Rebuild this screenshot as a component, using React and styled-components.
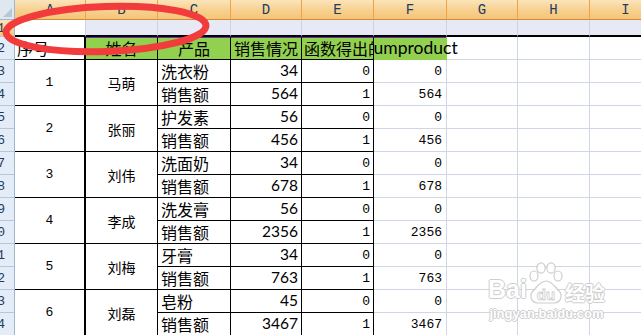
import React from "react";
import styled, { createGlobalStyle, css } from "styled-components";

const GlobalStyle = createGlobalStyle`
  html, body {
    margin: 0;
    padding: 0;
    background: #fff;
    overflow: hidden;
  }
  body {
    font-family: "Noto Sans CJK SC", sans-serif;
  }
`;

const GRID = "#cfd6e6";
const INK = "#000";
const GREEN = "#92d050";
const CJK = `"Noto Sans CJK SC", sans-serif`;
const MONO = `"Liberation Mono", "Noto Sans CJK SC", monospace`;
const LATIN = `Lato, "Liberation Sans", sans-serif`;

const Page = styled.div`
  position: relative;
  width: 641px;
  height: 335px;
  overflow: hidden;
  background: #fff;
`;

const Sheet = styled.div`
  display: grid;
  grid-template-columns: 15px 71px 72px 73px 71px 72px 73px 71px 72px 72px;
  grid-template-rows: 20px 17px 23px;
  grid-auto-rows: 23px;
  width: max-content;
`;

const cell = css`
  box-sizing: border-box;
  display: flex;
  align-items: center;
  overflow: hidden;
  white-space: nowrap;
  line-height: 1;
  color: ${INK};
  border-right: 1px solid ${GRID};
  border-bottom: 1px solid ${GRID};
`;

const Corner = styled.div`
  ${cell};
  position: relative;
  background: #dfe7f1;
  border-right: 1px solid #9eb6ce;
  border-bottom: 1px solid #9eb6ce;
  &::after {
    content: "";
    position: absolute;
    right: 2px;
    bottom: 2px;
    border-left: 9px solid transparent;
    border-bottom: 9px solid #b7c7da;
  }
`;

const ColHead = styled.div`
  ${cell};
  justify-content: center;
  background: linear-gradient(#fbe4ba, #f7d08f 55%, #f5c577);
  border-right: 1px solid #f2a143;
  border-bottom: 1px solid #d4883a;
  font-family: ${MONO};
  font-size: 14px;
  color: #203c5e;
`;

const RowHead = styled.div`
  ${cell};
  background: ${({ $sel }) =>
    $sel ? "linear-gradient(#fbe4ba, #f5c577)" : "#e4ecf7"};
  border-right: 1px solid #9eb6ce;
  border-bottom: 1px solid #b5c7db;
  font-family: ${MONO};
  font-size: 13px;
  color: #203c5e;
`;

const RowNum = styled.div`
  display: flex;
  justify-content: flex-end;
  width: 5px;
  flex: none;
`;

const SelCell = styled.div`
  ${cell};
  background: ${({ $active }) => ($active ? "#fff" : "#e7eaf4")};
  border-right: 1px solid #cdd3e4;
  border-bottom: 2px solid ${INK};
`;

const HeadCell = styled.div`
  ${cell};
  justify-content: ${({ $align }) => $align || "center"};
  padding: 0 ${({ $align }) => ($align ? "2px" : "0")};
  background: ${({ $green }) => ($green ? GREEN : "#fff")};
  box-shadow: ${({ $green }) => ($green ? "inset 0 1px 0 #7030a0" : "none")};
  border-right: ${({ $thick }) => ($thick ? 2 : 1)}px solid ${INK};
  border-bottom: 1px solid ${INK};
  font-family: ${CJK};
  font-size: 16px;
`;

const SumCell = styled.div`
  ${cell};
  overflow: visible;
  background: ${GREEN};
  box-shadow: inset 0 1px 0 #7030a0;
  border-right: 1px solid ${GREEN};
  border-bottom: 1px solid ${GREEN};
  clip-path: inset(0 -200px 0 0);
  font-family: ${LATIN};
  font-size: 17.5px;
  span {
    margin-left: -8px;
  }
`;

const IndexCell = styled.div`
  ${cell};
  grid-row: span 2;
  justify-content: center;
  background: #fff;
  border-right: 2px solid ${INK};
  border-bottom: 1px solid ${INK};
  font-family: ${MONO};
  font-size: 13px;
`;

const NameCell = styled.div`
  ${cell};
  grid-row: span 2;
  justify-content: center;
  background: #fff;
  border-right: 1px solid ${INK};
  border-bottom: 1px solid ${INK};
  font-family: ${CJK};
  font-size: 14px;
`;

const ProductCell = styled.div`
  ${cell};
  padding-left: 3px;
  background: #fff;
  border-right: 1px solid ${INK};
  border-bottom: 1px solid ${INK};
  font-family: ${CJK};
  font-size: 16px;
`;

const NumCell = styled.div`
  ${cell};
  justify-content: flex-end;
  padding-right: ${({ $pad }) => $pad}px;
  background: #fff;
  border-right: 1px solid ${({ $open }) => ($open ? GRID : INK)};
  border-bottom: 1px solid ${({ $open }) => ($open ? GRID : INK)};
  font-family: ${({ $big }) => ($big ? LATIN : MONO)};
  font-size: ${({ $big }) => ($big ? 15.5 : 13)}px;
`;

const BlankCell = styled.div`
  ${cell};
  background: transparent;
`;

const Ring = styled.svg`
  position: absolute;
  left: 0;
  top: 0;
  pointer-events: none;
`;

const Watermark = styled.div`
  position: absolute;
  left: 488px;
  top: 262px;
  display: flex;
  flex-direction: column;
  align-items: center;
  gap: 3px;
  opacity: 0.9;
  pointer-events: none;
`;

const MarkLine = styled.div`
  display: flex;
  align-items: flex-end;
  gap: 1px;
`;

const MarkText = styled.span`
  font-family: ${({ $cjk }) => ($cjk ? CJK : `"Liberation Sans", sans-serif`)};
  font-weight: 700;
  font-size: ${({ $size }) => $size}px;
  line-height: 1;
  color: #fff;
  text-shadow: -1px 0 #c9c9c9, 1px 0 #c9c9c9, 0 -1px #c9c9c9, 0 1px #c9c9c9;
  margin-bottom: ${({ $lift }) => $lift || 0}px;
`;

const COLS = ["A", "B", "C", "D", "E", "F", "G", "H", "I"];

const people = [
  { id: 1, name: "马萌", product: "洗衣粉", qty: 34, sales: 564 },
  { id: 2, name: "张丽", product: "护发素", qty: 56, sales: 456 },
  { id: 3, name: "刘伟", product: "洗面奶", qty: 34, sales: 678 },
  { id: 4, name: "李成", product: "洗发膏", qty: 56, sales: 2356 },
  { id: 5, name: "刘梅", product: "牙膏", qty: 34, sales: 763 },
  { id: 6, name: "刘磊", product: "皂粉", qty: 45, sales: 3467 },
];

function Head({ n, sel }) {
  return (
    <RowHead $sel={sel}>
      <RowNum>{n}</RowNum>
    </RowHead>
  );
}

function Blanks() {
  return (
    <>
      <BlankCell />
      <BlankCell />
      <BlankCell />
    </>
  );
}

function Paw() {
  return (
    <svg width="36" height="42" viewBox="0 0 36 42">
      <g fill="#fff" stroke="#c9c9c9" strokeWidth="1.2">
        <ellipse cx="6" cy="14" rx="4" ry="5" />
        <ellipse cx="13" cy="6" rx="4.2" ry="5.2" />
        <ellipse cx="23" cy="6" rx="4.2" ry="5.2" />
        <ellipse cx="30" cy="14" rx="4" ry="5" />
        <path d="M18 19 C24 19 27 25 31 29 C35 33 33 41 26 41 L10 41 C3 41 1 33 5 29 C9 25 12 19 18 19 Z" />
      </g>
      <text
        x="18"
        y="38"
        textAnchor="middle"
        fontFamily="Liberation Sans, sans-serif"
        fontWeight="700"
        fontSize="15"
        fill="#fff"
        stroke="#c9c9c9"
        strokeWidth="0.8"
      >
        du
      </text>
    </svg>
  );
}

export default function App() {
  return (
    <Page>
      <GlobalStyle />
      <Sheet>
        <Corner />
        {COLS.map((c) => (
          <ColHead key={c}>{c}</ColHead>
        ))}

        <Head n={1} sel />
        <SelCell $active />
        {COLS.slice(1).map((c) => (
          <SelCell key={c} />
        ))}

        <Head n={2} />
        <HeadCell $align="flex-start" $thick>
          序号
        </HeadCell>
        <HeadCell $green>姓名</HeadCell>
        <HeadCell $green>产品</HeadCell>
        <HeadCell $green>销售情况</HeadCell>
        <HeadCell $green $align="flex-start">
          函数得出的结果
        </HeadCell>
        <SumCell>
          <span>sumproduct</span>
        </SumCell>
        <Blanks />

        {people.map((p, i) => (
          <React.Fragment key={p.id}>
            <Head n={3 + i * 2} />
            <IndexCell>{p.id}</IndexCell>
            <NameCell>{p.name}</NameCell>
            <ProductCell>{p.product}</ProductCell>
            <NumCell $big $pad={3}>{p.qty}</NumCell>
            <NumCell $pad={3}>0</NumCell>
            <NumCell $open $pad={4}>0</NumCell>
            <Blanks />

            <Head n={4 + i * 2} />
            <ProductCell>销售额</ProductCell>
            <NumCell $big $pad={3}>{p.sales}</NumCell>
            <NumCell $pad={3}>1</NumCell>
            <NumCell $open $pad={4}>{p.sales}</NumCell>
            <Blanks />
          </React.Fragment>
        ))}
      </Sheet>

      <Ring width="230" height="70" viewBox="0 0 230 70">
        <ellipse
          cx="106"
          cy="29"
          rx="100"
          ry="22.5"
          fill="none"
          stroke="#f23b3b"
          strokeWidth="7"
          transform="rotate(-2 106 29)"
        />
      </Ring>

      <Watermark>
        <MarkLine>
          <MarkText $size={25} $lift={2}>Bai</MarkText>
          <Paw />
          <MarkText $cjk $size={20} $lift={1}>
            经验
          </MarkText>
        </MarkLine>
        <MarkText $size={13}>jingyan.baidu.com</MarkText>
      </Watermark>
    </Page>
  );
}
